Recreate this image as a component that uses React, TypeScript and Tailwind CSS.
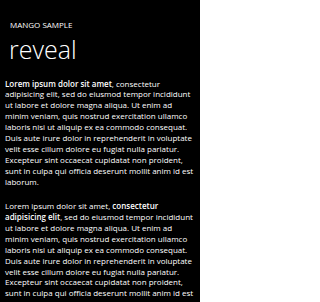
import React from 'react';

const body =
  ', sed do eiusmod tempor incididunt ut labore et dolore magna aliqua. Ut enim ad minim veniam, quis nostrud exercitation ullamco laboris nisi ut aliquip ex ea commodo consequat. Duis aute irure dolor in reprehenderit in voluptate velit esse cillum dolore eu fugiat nulla pariatur. Excepteur sint occaecat cupidatat non proident, sunt in culpa qui officia deserunt mollit anim id est laborum.';

const App = () => {
  return (
    <div
      className="w-[200px] h-[302px] overflow-hidden bg-black text-white"
      style={{ fontFamily: '"Open Sans", "Noto Sans", sans-serif' }}
    >
      <div className="pl-[10px] pt-[19.5px]">
        <div className="text-[8px] leading-[9px] uppercase">Mango Sample</div>
        <h1 className="text-[25px] leading-[30px] font-light -ml-[1px] mt-[5px]">reveal</h1>
      </div>
      <div className="px-[5px] mt-[15px] text-[8px] leading-[10.9px]">
        <p>
          <b className="font-semibold">Lorem ipsum dolor sit amet</b>, consectetur adipisicing elit{body}
        </p>
        <p className="mt-[13.5px]">
          Lorem ipsum dolor sit amet, <b className="font-semibold">consectetur adipisicing elit</b>{body}
        </p>
      </div>
    </div>
  );
};

export default App;
